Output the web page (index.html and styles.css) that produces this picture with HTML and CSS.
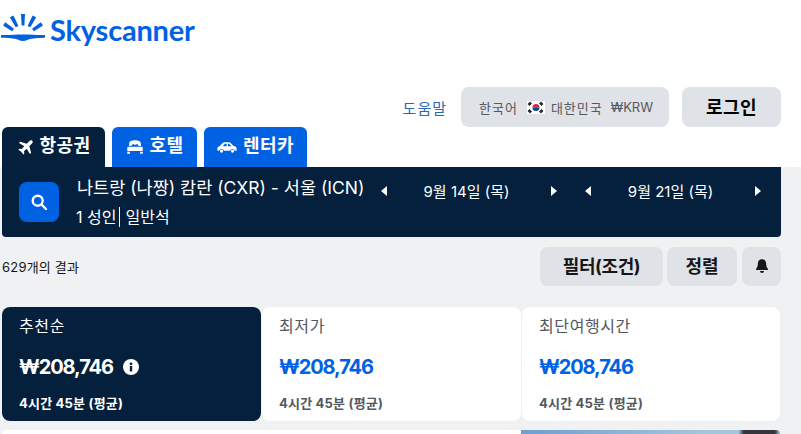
FILE: index.html
```html
<!DOCTYPE html>
<html lang="ko">
<head>
    <meta charset="utf-8">
    <title>Skyscanner</title>
    <link rel="stylesheet" href="styles.css">
</head>
<body>
<div class="top">
    <a class="logo" href="#">
        <svg width="44" height="28" viewBox="0 0 44 28" fill="#0062e3">
            <path d="M0 22c7 .2 15-.5 22-.5s15 .7 22 .5v2.800c-5.500.1-10.500.5-14 1-2.500.4-5 2.200-8 2.200s-5.500-1.800-8-2.200c-3.500-.5-8.500-.9-14-1z"/>
            <path d="M20 1h4l-.6 11.500h-2.800zM8.800 4.300l3.600-1.800 5 10.500-2.700 1.300zM31.600 2.500l3.600 1.800-5.900 10-2.700-1.300zM2 12.600l2.200-3.400 8.800 6.600-1.900 2.400zM39.800 9.200l2.200 3.400-9.100 5.600-1.900-2.400z"/>
        </svg>
        <span class="logo-text">Skyscanner</span>
    </a>
</div>

<div class="account">
    <a class="help" href="#">도움말</a>
    <div class="locale">
        <span>한국어</span>
        <svg class="flag" width="18" height="13" viewBox="0 0 18 13">
            <rect width="18" height="13" fill="#fff"/>
            <path d="M5.500 6.500a3.500 3.500 0 0 1 7 0z" fill="#cd2e3a"/>
            <path d="M5.500 6.500a3.500 3.500 0 0 0 7 0z" fill="#0047a0"/>
            <path d="M1 3.500l2.500-2.500M2 4.500l2.500-2.500M13.500 1l2.500 2.500M12.500 2l2.500 2.500M1 9.500l2.500 2.500M2 8.500l2.500 2.500M13.500 12l2.500-2.500M12.500 11l2.500-2.500" stroke="#111" stroke-width="1.100"/>
        </svg>
        <span>대한민국</span>
        <span class="currency">₩KRW</span>
    </div>
    <button class="login">로그인</button>
</div>

<div class="tabs">
    <a class="tab tab-active" href="#">
        <svg width="17" height="17" viewBox="0 0 24 24" fill="#fff">
            <path d="M21.500 2.500c-1-1-2.800-.8-4 .4l-3.700 3.700L4.500 4 2.800 5.700l7.500 4.600-3.700 3.800-3.200-.4L2 15.100l4 2.900 2.900 4 1.400-1.400-.4-3.200 3.800-3.700 4.600 7.500 1.700-1.700-2.600-9.300 3.700-3.700c1.200-1.200 1.400-3 .4-4z"/>
        </svg>
        항공권
    </a>
    <a class="tab" href="#">
        <svg width="18" height="14" viewBox="0 3 24 19" fill="#fff">
            <path d="M4 11V8c0-3 3.500-4.500 8-4.500S20 5 20 8v3h-3c-.4-1.500-1.400-2.200-2.700-2.200-1 0-1.800.4-2.300 1.100-.5-.7-1.300-1.100-2.300-1.100C8.400 8.800 7.400 9.500 7 11zM1.500 13.500c0-1 .8-1.500 1.500-1.500h18c.7 0 1.500.5 1.500 1.500V18h-21zM1.500 19H5v2.500H1.500zM19 19h3.500v2.500H19z"/>
        </svg>
        호텔
    </a>
    <a class="tab" href="#">
        <svg width="20" height="13" viewBox="0 4 24 15" fill="#fff">
            <path d="M.5 12.500c0-1.500 1-2.300 2.500-2.500l3.500-3.500C7.500 5.500 8.500 5.300 10 5.300h3.500c1.500 0 2.500.5 3.500 1.500l3 3c2 .4 3.500 1.200 3.500 3v2.700h-2a3 3 0 0 0-5.800 0H8.300a3 3 0 0 0-5.800 0h-2zM9.500 7L7 10h4.500V7zM13 7v3h4.500l-2.600-2.500c-.4-.4-.8-.5-1.400-.5z"/>
            <circle cx="5.400" cy="15.800" r="1.900"/><circle cx="18.600" cy="15.800" r="1.900"/>
        </svg>
        렌터카
    </a>
</div>

<div class="search-bar">
    <a class="search-btn" href="#">
        <svg width="18" height="18" viewBox="0 0 18 18" fill="none" stroke="#fff" stroke-width="2.400" stroke-linecap="round">
            <circle cx="7.700" cy="7.700" r="5"/><path d="M11.500 11.500l4.500 4.500"/>
        </svg>
    </a>
    <div class="route">
        <div class="route-name">나트랑 (나짱) 캄란 (CXR) - 서울 (ICN)</div>
        <div class="route-info"><span class="pax">1 성인</span><span>일반석</span></div>
    </div>
    <div class="date-picker">
        <span class="arrow arrow-left"></span>
        <span class="date">9월 14일 (목)</span>
        <span class="arrow arrow-right"></span>
    </div>
    <div class="date-picker">
        <span class="arrow arrow-left"></span>
        <span class="date">9월 21일 (목)</span>
        <span class="arrow arrow-right"></span>
    </div>
</div>

<div class="result-row">
    <span class="result-count">629개의 결과</span>
    <div class="result-actions">
        <button class="action action-filter">필터(조건)</button>
        <button class="action action-sort">정렬</button>
        <button class="action action-bell">
            <svg width="16" height="16" viewBox="0 0 16 16" fill="#161616">
                <path d="M8 1.300c-2.700 0-4.200 2-4.200 4.500 0 2.600-.8 4-1.800 5.200v1h12v-1c-1-1.200-1.800-2.600-1.800-5.200 0-2.500-1.500-4.500-4.200-4.500z"/>
                <path d="M6 13h4a2 2 0 0 1-4 0z"/>
            </svg>
        </button>
    </div>
</div>

<div class="sort-tabs">
    <div class="sort-tab sort-tab-active">
        <div class="sort-label">추천순</div>
        <div class="sort-price">₩208,746
            <svg width="16" height="16" viewBox="0 0 16 16">
                <circle cx="8" cy="8" r="8" fill="#fff"/>
                <rect x="6.800" y="7" width="2.400" height="5.500" fill="#05203c"/>
                <circle cx="8" cy="4.800" r="1.400" fill="#05203c"/>
            </svg>
        </div>
        <div class="sort-time">4시간 45분 (평균)</div>
    </div>
    <div class="sort-tab">
        <div class="sort-label">최저가</div>
        <div class="sort-price">₩208,746</div>
        <div class="sort-time">4시간 45분 (평균)</div>
    </div>
    <div class="sort-tab">
        <div class="sort-label">최단여행시간</div>
        <div class="sort-price">₩208,746</div>
        <div class="sort-time">4시간 45분 (평균)</div>
    </div>
</div>

<div class="cards">
    <div class="card"></div>
    <div class="card-ad"></div>
</div>
</body>
</html>
```

FILE: styles.css
```css
html,body{
    margin: 0;
    height: 434px;
    overflow: hidden;
}

body{
    background: linear-gradient(#fff 167px, #eff1f3 167px);
    color: #161616;
    font-family: Inter, Roboto, "Noto Sans CJK KR", sans-serif;
    font-size: 14px;
}

a{
    text-decoration: none;
}

button{
    border: 0;
    font-family: inherit;
    padding: 0;
}

.top{
    height: 87px;
    padding: 11px 0 0 1px;
    box-sizing: border-box;
}

.logo{
    display: flex;
    align-items: center;
    gap: 5px;
    height: 36px;
    color: #0062e3;
}

.logo svg{
    margin-top: -5px;
}

.logo-text{
    font-family: Lato, Inter, sans-serif;
    font-size: 29px;
    font-weight: 700;
    letter-spacing: -0.2px;
}

.account{
    display: flex;
    justify-content: flex-end;
    align-items: center;
    height: 40px;
    padding-right: 20px;
}

.help{
    margin-right: 14px;
    color: #2a68b6;
    font-size: 15px;
    letter-spacing: 1px;
}

.locale{
    display: flex;
    align-items: center;
    height: 40px;
    width: 208px;
    box-sizing: border-box;
    padding-left: 18px;
    background-color: #dfe2e6;
    border-radius: 8px;
    color: #545860;
    font-size: 13px;
    letter-spacing: 1px;
}

.flag{
    margin: 0 6px 0 9px;
}

.currency{
    margin-left: 8px;
    letter-spacing: 0;
}

.login{
    width: 99px;
    height: 40px;
    padding-bottom: 2px;
    margin-left: 13px;
    background-color: #dfe2e6;
    border-radius: 8px;
    font-size: 18px;
    font-weight: 700;
    letter-spacing: 0.5px;
}

.tabs{
    display: flex;
    gap: 7px;
    height: 40px;
    padding-left: 2px;
}

.tab{
    display: flex;
    align-items: center;
    justify-content: center;
    gap: 6px;
    height: 40px;
    padding-bottom: 6px;
    box-sizing: border-box;
    width: 103px;
    background-color: #0062e3;
    border-radius: 6px 6px 0 0;
    color: #fff;
    font-size: 18px;
    font-weight: 700;
    letter-spacing: 0.4px;
}

.tab svg{
    margin-top: 6px;
}

.tab:nth-child(2){
    width: 85px;
}

.tab-active{
    background-color: #05203c;
}

.search-bar{
    display: flex;
    align-items: center;
    height: 70px;
    margin: 0 20px 0 2px;
    background-color: #05203c;
    border-radius: 0 0 4px 4px;
    color: #fff;
}

.search-btn{
    display: flex;
    align-items: center;
    justify-content: center;
    width: 40px;
    height: 40px;
    margin: 0 18px 0 17px;
    background-color: #0062e3;
    border-radius: 8px;
}

.route{
    width: 304px;
    flex-shrink: 0;
}

.route-name{
    font-size: 17.500px;
    white-space: nowrap;
    line-height: 22px;
}

.route-info{
    display: flex;
    margin-top: 8px;
    margin-left: -1px;
    font-size: 16px;
    line-height: 20px;
}

.pax{
    padding-right: 3px;
    margin-right: 5px;
    border-right: 1px solid #fff;
}

.date-picker{
    display: flex;
    align-items: center;
    justify-content: space-between;
    width: 176px;
    margin-right: 28px;
    position: relative;
    top: -11px;
}

.date-picker:last-child{
    margin-right: 0;
}

.date{
    margin: 0 5px 2px 0;
    font-size: 15px;
}

.arrow{
    width: 0;
    height: 0;
    border-top: 5px solid transparent;
    border-bottom: 5px solid transparent;
}

.arrow-left{
    border-right: 6px solid #fff;
}

.arrow-right{
    border-left: 6px solid #fff;
}

.result-row{
    display: flex;
    justify-content: space-between;
    align-items: center;
    height: 40px;
    margin: 9px 20px 0 2px;
}

.result-count{
    font-size: 13px;
    letter-spacing: 0.2px;
}

.result-actions{
    display: flex;
    gap: 4px;
}

.action{
    height: 39px;
    padding-bottom: 3px;
    background-color: #dfe2e6;
    border-radius: 8px;
    color: #161616;
    font-size: 18px;
    font-weight: 700;
}

.action-filter{
    width: 123px;
    letter-spacing: -0.4px;
}

.action-sort{
    width: 70px;
}

.action-bell{
    width: 39px;
    padding-bottom: 0;
    margin-left: 1px;
    display: flex;
    align-items: center;
    justify-content: center;
}

.sort-tabs{
    display: grid;
    grid-template-columns: 259px 259px 258px;
    gap: 1px;
    height: 114px;
    margin: 21px 0 0 2px;
}

.sort-tab{
    padding: 9px 17px 0 17px;
    background-color: #fff;
    border-radius: 8px;
    color: #545860;
}

.sort-tab-active{
    background-color: #05203c;
    color: #fff;
}

.sort-label{
    font-size: 16px;
    line-height: 20px;
    letter-spacing: 0.6px;
}

.sort-price{
    display: flex;
    align-items: center;
    gap: 10px;
    margin-top: 17px;
    color: #0062e3;
    font-size: 20px;
    font-weight: 700;
    line-height: 28px;
    letter-spacing: -1.100px;
}

.sort-tab-active .sort-price{
    color: #fff;
}

.sort-time{
    margin-top: 13px;
    font-size: 13px;
    font-weight: 700;
    line-height: 18px;
    letter-spacing: 0.2px;
}

.cards{
    display: grid;
    grid-template-columns: 519px 259px;
    height: 4px;
    overflow: hidden;
    margin-top: 9px;
    margin-left: 2px;
}

.card{
    background-color: #fff;
    border-radius: 8px 0 0 0;
}

.card-ad{
    background: linear-gradient(90deg, #6d9fd0, #a4c5dd 70%, #a4c5dd 84%, #33363a 86%, #33363a 98%, #a4c5dd);
    border-radius: 0 8px 0 0;
}
```
